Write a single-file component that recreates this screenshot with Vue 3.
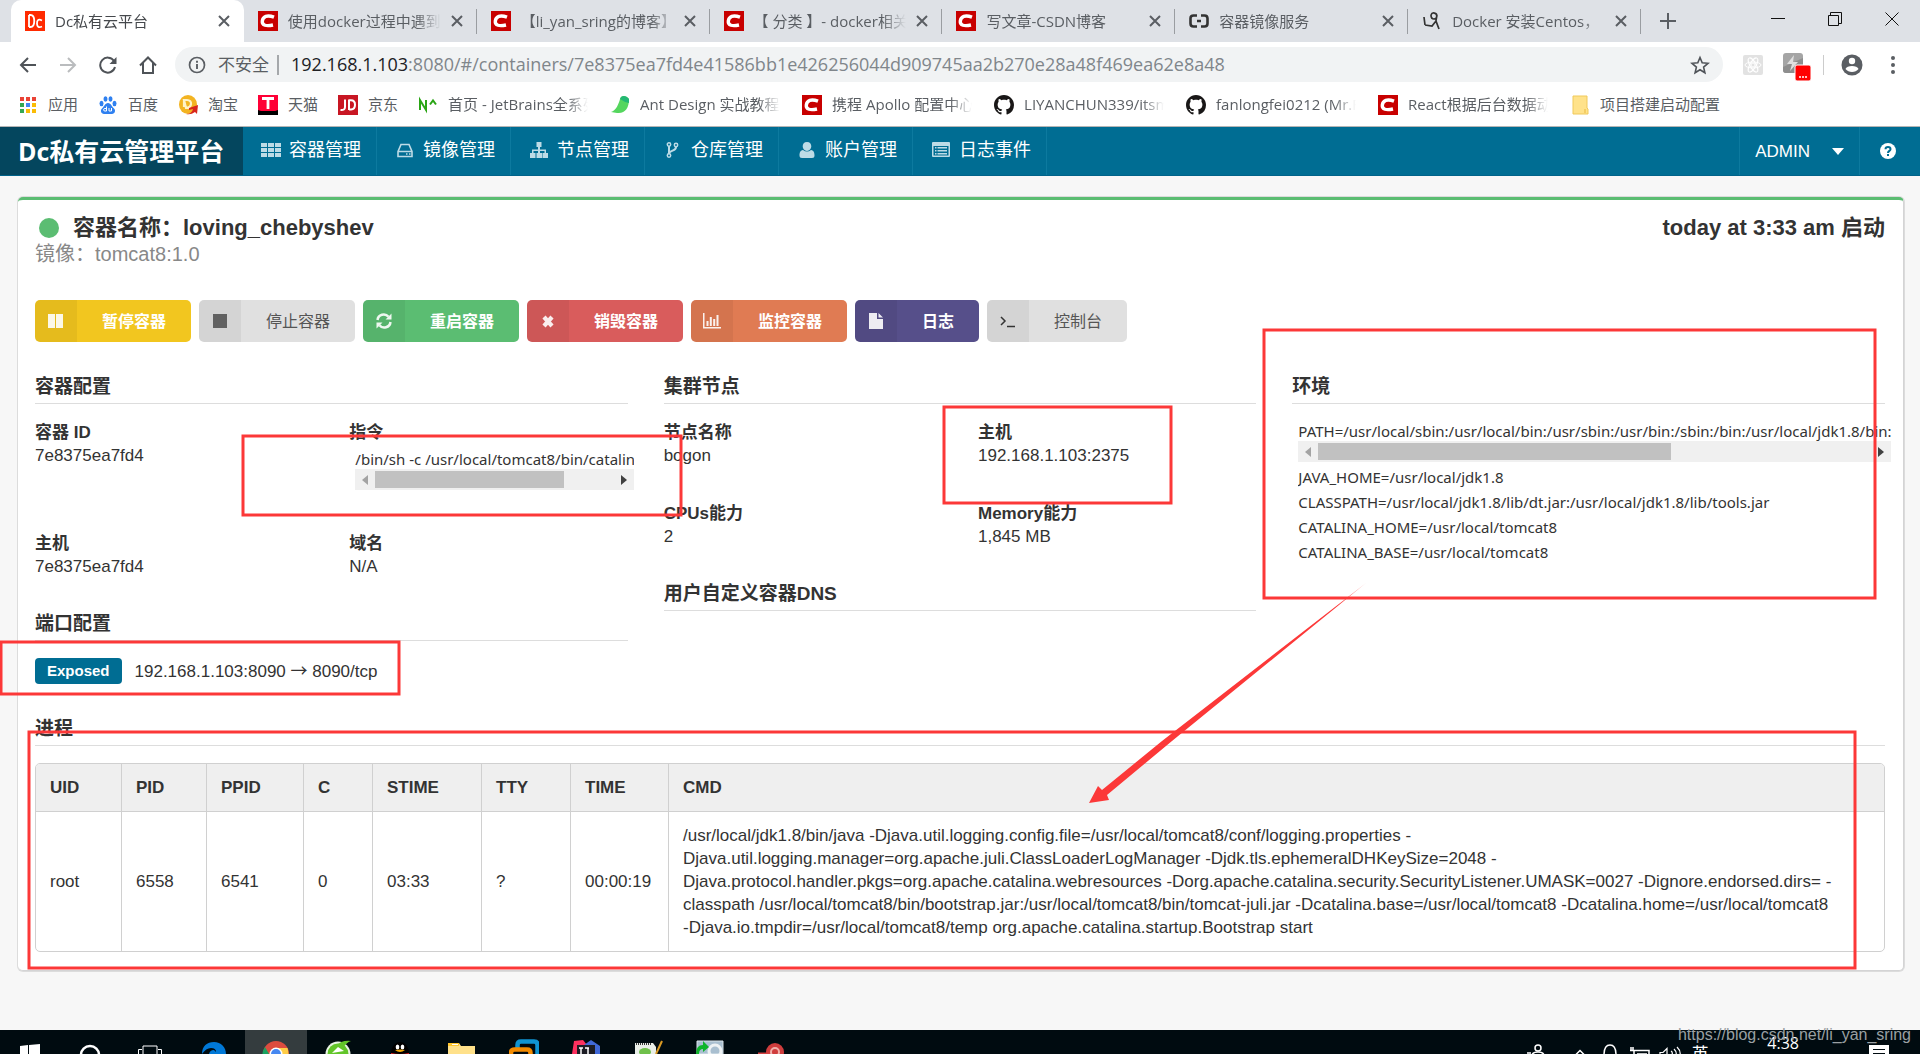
<script setup>
const tabs = [
  { title: 'Dc私有云平台', icon: 'dc', active: true },
  { title: '使用docker过程中遇到的问题', icon: 'csdn' },
  { title: '【li_yan_sring的博客】', icon: 'csdn' },
  { title: '【 分类 】- docker相关', icon: 'csdn' },
  { title: '写文章-CSDN博客', icon: 'csdn' },
  { title: '容器镜像服务', icon: 'aliyun' },
  { title: 'Docker 安装Centos，', icon: 'figure' }
]

const bookmarks = [
  { title: '应用', icon: 'apps' },
  { title: '百度', icon: 'baidu' },
  { title: '淘宝', icon: 'taobao' },
  { title: '天猫', icon: 'tmall' },
  { title: '京东', icon: 'jd' },
  { title: '首页 - JetBrains全系列', icon: 'na' },
  { title: 'Ant Design 实战教程（', icon: 'leaf' },
  { title: '携程 Apollo 配置中心', icon: 'csdn' },
  { title: 'LIYANCHUN339/itsm', icon: 'github' },
  { title: 'fanlongfei0212 (Mr.F', icon: 'github' },
  { title: 'React根据后台数据动态', icon: 'csdn' },
  { title: '项目搭建启动配置', icon: 'folder' }
]

const nav = [
  { title: '容器管理', icon: 'grid' },
  { title: '镜像管理', icon: 'disk' },
  { title: '节点管理', icon: 'sitemap' },
  { title: '仓库管理', icon: 'fork' },
  { title: '账户管理', icon: 'user' },
  { title: '日志事件', icon: 'list' }
]

const actions = [
  { title: '暂停容器', icon: 'pause', tone: 'yellow' },
  { title: '停止容器', icon: 'stop', tone: 'grey' },
  { title: '重启容器', icon: 'refresh', tone: 'green' },
  { title: '销毁容器', icon: 'remove', tone: 'red' },
  { title: '监控容器', icon: 'chart', tone: 'orange' },
  { title: '日志', icon: 'file', tone: 'purple' },
  { title: '控制台', icon: 'terminal', tone: 'grey' }
]

const nodeFields = [
  { label: '节点名称', value: 'bogon' },
  { label: '主机', value: '192.168.1.103:2375' },
  { label: 'CPUs能力', value: '2' },
  { label: 'Memory能力', value: '1,845 MB' }
]

const env = [
  'JAVA_HOME=/usr/local/jdk1.8',
  'CLASSPATH=/usr/local/jdk1.8/lib/dt.jar:/usr/local/jdk1.8/lib/tools.jar',
  'CATALINA_HOME=/usr/local/tomcat8',
  'CATALINA_BASE=/usr/local/tomcat8'
]

const columns = ['UID', 'PID', 'PPID', 'C', 'STIME', 'TTY', 'TIME', 'CMD']
const cmd = [
  '/usr/local/jdk1.8/bin/java -Djava.util.logging.config.file=/usr/local/tomcat8/conf/logging.properties -',
  'Djava.util.logging.manager=org.apache.juli.ClassLoaderLogManager -Djdk.tls.ephemeralDHKeySize=2048 -',
  'Djava.protocol.handler.pkgs=org.apache.catalina.webresources -Dorg.apache.catalina.security.SecurityListener.UMASK=0027 -Dignore.endorsed.dirs= -',
  'classpath /usr/local/tomcat8/bin/bootstrap.jar:/usr/local/tomcat8/bin/tomcat-juli.jar -Dcatalina.base=/usr/local/tomcat8 -Dcatalina.home=/usr/local/tomcat8',
  '-Djava.io.tmpdir=/usr/local/tomcat8/temp org.apache.catalina.startup.Bootstrap start'
].join('\n')
const rows = [['root', '6558', '6541', '0', '03:33', '?', '00:00:19', cmd]]
</script>

<template>
  <div class="screen">
    <header class="browser">
      <div class="tabstrip">
        <div class="tabs">
          <div v-for="t in tabs" :key="t.title" class="tab" :class="{ active: t.active }">
            <svg class="fav" viewBox="0 0 20 20">
              <template v-if="t.icon === 'dc'">
                <rect width="20" height="20" fill="#ff2a00" />
                <path d="M4 4v12M4 4h1.500c5 0 5 12 0 12H4M17 9.500c-4-2-5 0-5 3s1.500 4.500 5 3" fill="none" stroke="#fff" stroke-width="1.800" />
              </template>
              <template v-else-if="t.icon === 'csdn'">
                <rect width="20" height="20" fill="#c80000" />
                <path d="M16 6.200C9 3.500 5 5.500 4.300 10c-.5 4.500 4 5.500 10.700 4" fill="none" stroke="#fff" stroke-width="3.400" />
              </template>
              <path v-else-if="t.icon === 'aliyun'" d="M8 4.500H4.500Q1.500 4.500 1.500 7.500v5q0 3 3 3H8M12 4.500h3.500q3 0 3 3v5q0 3-3 3H12M8 10h4" fill="none" stroke="#333" stroke-width="2.600" />
              <path v-else d="M9 4a3 3 0 1 1 3 4Q9 8 9 4M15 4q-1 5-1 6l3 8M14 10L10 15l-7-1M2 6l1 8" fill="none" stroke="#333" stroke-width="1.700" />
            </svg>
            <span class="tab-title">{{ t.title }}</span>
            <button class="plain tab-close" aria-label="关闭标签页">
              <svg width="12" height="12" viewBox="0 0 12 12"><path d="M1 1l10 10M11 1L1 11" stroke="#5a5e63" stroke-width="2" /></svg>
            </button>
          </div>
        </div>
        <button class="plain new-tab" aria-label="新标签页">
          <svg width="16" height="16" viewBox="0 0 16 16"><path d="M8 0v16M0 8h16" stroke="#5a5e63" stroke-width="2" /></svg>
        </button>
        <div class="window-buttons">
          <button class="plain" aria-label="最小化"><svg width="14" height="14" viewBox="0 0 14 14"><path d="M0 6.500h14" stroke="#111" /></svg></button>
          <button class="plain" aria-label="还原"><svg width="14" height="14" viewBox="0 0 14 14"><path d="M.5 3.500h10v10H.5zM2.500 3.500v-3h11v11h-3" fill="none" stroke="#111" /></svg></button>
          <button class="plain" aria-label="关闭"><svg width="14" height="14" viewBox="0 0 14 14"><path d="M.5.5l13 13M13.500.5l-13 13" stroke="#111" /></svg></button>
        </div>
      </div>

      <div class="toolbar">
        <button class="plain tool" aria-label="后退"><svg width="18" height="18" viewBox="0 0 18 18"><path d="M17 9H2M9 2L2 9l7 7" fill="none" stroke="#4f5358" stroke-width="2" /></svg></button>
        <button class="plain tool" aria-label="前进"><svg width="18" height="18" viewBox="0 0 18 18"><path d="M1 9h15M9 2l7 7-7 7" fill="none" stroke="#babcbe" stroke-width="2" /></svg></button>
        <button class="plain tool" aria-label="重新加载"><svg width="18" height="18" viewBox="0 0 18 18"><path d="M15 5A7.500 7.500 0 1 0 16 11" fill="none" stroke="#4f5358" stroke-width="2" /><path d="M17.500 1v7h-7z" fill="#4f5358" /></svg></button>
        <button class="plain tool" aria-label="主页"><svg width="18" height="18" viewBox="0 0 18 18"><path d="M1 9.500L9 1.500l8 8M4 7v10h10V7" fill="none" stroke="#4f5358" stroke-width="2" /></svg></button>
        <div class="omnibox">
          <svg width="18" height="18" viewBox="0 0 18 18"><circle cx="9" cy="9" r="7.500" fill="none" stroke="#5a5e63" stroke-width="1.700" /><path d="M9 8v5M9 4.700v2" stroke="#5a5e63" stroke-width="1.900" /></svg>
          <span class="insecure">不安全</span>
          <label class="host" for="address">192.168.1.103</label>
          <input id="address" class="address" type="text" value=":8080/#/containers/7e8375ea7fd4e41586bb1e426256044d909745aa2b270e28a48f469ea62e8a48" />
          <button class="plain" aria-label="加入书签"><svg width="20" height="20" viewBox="0 0 20 20"><path d="M10 2.500l2.200 5.300 5.800.5-4.400 3.800 1.300 5.600L10 14.700l-4.900 3 1.300-5.600L2 8.300l5.800-.5z" fill="none" stroke="#4f5358" stroke-width="1.600" /></svg></button>
        </div>
        <div class="extensions">
          <svg width="20" height="20" viewBox="0 0 20 20"><rect width="20" height="20" rx="2" fill="#e2e2e2" /><g fill="none" stroke="#fff"><ellipse cx="10" cy="10" rx="8" ry="3" /><ellipse cx="10" cy="10" rx="8" ry="3" transform="rotate(60 10 10)" /><ellipse cx="10" cy="10" rx="8" ry="3" transform="rotate(120 10 10)" /><circle cx="10" cy="10" r="2" /></g></svg>
          <svg class="thunder" width="28" height="28" viewBox="0 0 28 28"><rect y="0" width="20" height="20" rx="3" fill="#a5a5a5" /><path d="M0 14L20 5v12q0 3-3 3H3q-3 0-3-3z" fill="#8e8e8e" /><path d="M11 2L4 11h5l-2 7 8-9h-5z" fill="#e0e0e0" /><rect x="12" y="12" width="16" height="16" rx="2" fill="#f00" stroke="#fff" /><path d="M16 24h2M19 24h2M22 24h2" stroke="#fff" stroke-width="1.500" /></svg>
          <span class="tool-sep"></span>
          <svg width="22" height="22" viewBox="0 0 22 22"><circle cx="11" cy="11" r="10.500" fill="#5a5e63" /><circle cx="11" cy="7" r="3.200" fill="#fff" /><path d="M4.500 15c1-4 12-4 13 0-3 4-10 4-13 0z" fill="#fff" /></svg>
          <svg class="dots" width="4" height="18" viewBox="0 0 4 18"><circle cx="2" cy="2" r="2" fill="#5a5e63" /><circle cx="2" cy="9" r="2" fill="#5a5e63" /><circle cx="2" cy="16" r="2" fill="#5a5e63" /></svg>
        </div>
      </div>

      <nav class="bookmarks">
        <a v-for="b in bookmarks" :key="b.title" href="#" class="bookmark">
          <svg class="fav" viewBox="0 0 20 20">
            <template v-if="b.icon === 'apps'">
              <path d="M2 2h4v4H2zM8 2h4v4H8zM14 2h4v4h-4z" fill="#ea4335" />
              <path d="M2 8h4v4H2zM2 14h4v4H2z" fill="#34a853" />
              <path d="M8 8h4v4H8z" fill="#4285f4" />
              <path d="M14 8h4v4h-4zM8 14h4v4H8zM14 14h4v4h-4z" fill="#fbbc05" />
            </template>
            <g v-else-if="b.icon === 'baidu'" fill="#2f80f0">
              <ellipse cx="3.500" cy="8.500" rx="2" ry="2.700" /><ellipse cx="7.500" cy="4" rx="2" ry="2.700" /><ellipse cx="12.500" cy="4" rx="2" ry="2.700" /><ellipse cx="16.500" cy="8.500" rx="2" ry="2.700" />
              <path d="M10 8c3 0 4 4 6 5.500s1 5.500-2 5.500H6c-3 0-4-4-2-5.500S7 8 10 8z" />
              <path d="M8.500 11.500V16M8.500 16H7q-1.500 0-1.500-1.200T7 13.500h1.500M11 13v3h2.500v-3" fill="none" stroke="#fff" />
            </g>
            <template v-else-if="b.icon === 'taobao'">
              <ellipse cx="10" cy="9.500" rx="9" ry="9.500" fill="#f3b422" /><path d="M6 5h3c6 0 5 8-1 8zV12" fill="none" stroke="#fff3c8" stroke-width="2.200" /><path d="M8 19q6 0 7-5l-4 1v-2l9-3-1 9-2-2q-4 3-9 2z" fill="#d8261c" />
            </template>
            <template v-else-if="b.icon === 'tmall'">
              <rect width="20" height="20" fill="#ff0036" /><path d="M0 15l3 1h14l3-1v5H0z" fill="#000" /><path d="M4 3.500h12M10 3.500V14" stroke="#fff" stroke-width="2.800" />
            </template>
            <template v-else-if="b.icon === 'jd'">
              <rect width="20" height="20" fill="#c81623" /><path d="M7 4.500V12q0 3.500-4.500 3M11 4.500v10.500M11 5.200h2q4 0 4 4.500t-4 4.800h-2" fill="none" stroke="#fff" stroke-width="2" />
            </template>
            <path v-else-if="b.icon === 'na'" d="M2 15V5l6 10V5M12 9.500L15 5.500l3 4" fill="none" stroke="#2aa515" stroke-width="2" />
            <template v-else-if="b.icon === 'leaf'">
              <path d="M1 17C6 16 9 8 10 4c1-4 6-4 9 0 0 9-4 15-12 14z" fill="#55d65e" /><path d="M10 4c1-4 6-4 9 0v4q-5-1-9-4z" fill="#24b874" />
            </template>
            <template v-else-if="b.icon === 'csdn'">
              <rect width="20" height="20" fill="#c80000" /><path d="M16 6.200C9 3.500 5 5.500 4.300 10c-.5 4.500 4 5.500 10.700 4" fill="none" stroke="#fff" stroke-width="3.400" />
            </template>
            <path v-else-if="b.icon === 'github'" transform="scale(1.250)" fill="#191717" d="M8 0C3.580 0 0 3.580 0 8c0 3.540 2.290 6.530 5.470 7.590.4.070.55-.17.55-.38 0-.19-.01-.82-.01-1.490-2.010.37-2.530-.49-2.690-.94-.09-.23-.48-.94-.82-1.130-.28-.15-.68-.52-.01-.53.63-.01 1.080.58 1.230.82.72 1.210 1.870.87 2.330.66.07-.52.28-.87.51-1.070-1.780-.2-3.640-.89-3.640-3.950 0-.87.31-1.590.82-2.150-.08-.2-.36-1.020.08-2.120 0 0 .67-.21 2.200.82.64-.18 1.320-.27 2-.27s1.360.09 2 .27c1.530-1.040 2.200-.82 2.200-.82.44 1.100.16 1.920.08 2.120.51.56.82 1.270.82 2.150 0 3.070-1.870 3.750-3.650 3.950.29.25.54.73.54 1.480 0 1.070-.01 1.930-.01 2.200 0 .21.15.46.55.38A8.010 8.010 0 0 0 16 8c0-4.420-3.580-8-8-8z" />
            <template v-else>
              <path d="M3 1h14v12l1 1v5H3z" fill="#ffe28a" stroke="#f0c95a" /><path d="M15 14v4" stroke="#e8b93f" />
            </template>
          </svg>
          <span class="bookmark-title">{{ b.title }}</span>
        </a>
      </nav>
    </header>

    <div class="menu">
      <a href="#" class="brand">Dc私有云管理平台</a>
      <nav class="menu-items">
        <a v-for="n in nav" :key="n.title" href="#" class="menu-item">
          <svg width="20" height="18" viewBox="0 0 20 18" fill="#bddbe6">
            <path v-if="n.icon === 'grid'" d="M0 2h6v4H0zM7 2h6v4H7zM14 2h6v4h-6zM0 7h6v4H0zM7 7h6v4H7zM14 7h6v4h-6zM0 12h6v4H0zM7 12h6v4H7zM14 12h6v4h-6z" />
            <g v-else-if="n.icon === 'disk'" fill="none" stroke="#bddbe6" stroke-width="1.600"><path d="M3 10.500L6 3.500h8l3 7v5H3zM3 10.500h14" /><path d="M11 13h1.500M14 13h1.500" /></g>
            <path v-else-if="n.icon === 'sitemap'" d="M7.500 1h5v5H11v2.500h6V12h2v5h-5.500v-5H15.500v-2H11v2h2v5H7.500v-5H9v-2H4.500v2h2v5H1v-5h2V8.500h6V6H7.500z" />
            <g v-else-if="n.icon === 'fork'" fill="none" stroke="#bddbe6" stroke-width="1.500"><circle cx="6" cy="3.500" r="1.700" /><circle cx="6" cy="14.500" r="1.700" /><circle cx="13" cy="4" r="1.700" /><path d="M6 5v8M13 6c0 4-5 3-7 6" stroke-width="2" /></g>
            <path v-else-if="n.icon === 'user'" d="M10 1c3 0 4.300 2 4.300 4.300S12.500 10 10 10 5.700 7.600 5.700 5.300 7 1 10 1zM6 9q4 3 8 0c3 .5 3.500 3 3.500 5.500q0 2.500-2.500 2.500H5q-2.500 0-2.500-2.500C2.500 12 3 9.500 6 9z" />
            <g v-else><path fill-rule="evenodd" d="M2 1h16q1 0 1 1v13q0 1-1 1H2q-1 0-1-1V2q0-1 1-1zM2.500 5v9.500h15V5z" /><path d="M4 6h1.500v1.500H4zM6.500 6H16v1.500H6.500zM4 9h1.500v1.500H4zM6.500 9H16v1.500H6.500zM4 12h1.500v1.500H4zM6.500 12H16v1.500H6.500z" /></g>
          </svg>
          <span>{{ n.title }}</span>
        </a>
      </nav>
      <button class="plain account">ADMIN
        <svg width="12" height="7" viewBox="0 0 12 7"><path d="M0 0h12L6 7z" fill="#fff" /></svg>
      </button>
      <a href="#" class="help" aria-label="帮助">
        <svg width="18" height="18" viewBox="0 0 18 18"><circle cx="9" cy="9" r="8" fill="#fff" /><path d="M6.500 7.200Q6.500 5 9 5t2.500 2.200C11.500 9 9 8.800 9 11M9 12v2" fill="none" stroke="#006d93" stroke-width="2" /></svg>
      </a>
    </div>

    <main class="content">
      <section class="card">
        <div class="card-head">
          <div>
            <h1><svg width="20" height="20" viewBox="0 0 20 20"><circle cx="10" cy="10" r="10" fill="#5bbd72" /></svg>容器名称：loving_chebyshev</h1>
            <p class="image-name">镜像：tomcat8:1.0</p>
          </div>
          <h2 class="started">today at 3:33 am 启动</h2>
        </div>

        <div class="actions">
          <button v-for="a in actions" :key="a.title" class="action" :class="a.tone">
            <span class="action-icon">
              <svg width="18" height="18" viewBox="0 0 18 18" fill="currentColor">
                <path v-if="a.icon === 'pause'" d="M1 2h7v14H1zM9 2h7v14H9z" />
                <path v-else-if="a.icon === 'stop'" d="M2 2h14v14H2z" />
                <g v-else-if="a.icon === 'refresh'"><path d="M2.500 8A6.200 6.200 0 0 1 13.500 4.800M15.500 10A6.200 6.200 0 0 1 4.500 13.200" fill="none" stroke="currentColor" stroke-width="2.500" /><path d="M16.500 1.500v6h-6zM1.500 16.500v-6h6z" /></g>
                <path v-else-if="a.icon === 'remove'" d="M5 5l8 9M13 5L5 14" stroke="currentColor" stroke-width="4.200" />
                <path v-else-if="a.icon === 'chart'" d="M0 1h1.500v14H19v1.500H0zM3.500 9h2v5h-2zM6.800 5h2v9h-2zM10.200 7h2v7h-2zM13.500 3h2v11h-2z" />
                <path v-else-if="a.icon === 'file'" d="M2 1h8v6h6v10H2zM11.500 1L16 5.500h-4.500z" />
                <path v-else d="M2 5l4 4-4 4M8 14.500h8" fill="none" stroke="#222" stroke-width="1.500" />
              </svg>
            </span>
            <span class="action-text">{{ a.title }}</span>
          </button>
        </div>

        <div class="columns">
          <div>
            <h3>容器配置</h3>
            <dl class="fields">
              <div class="field tall"><dt>容器 ID</dt><dd>7e8375ea7fd4</dd></div>
              <div class="field tall">
                <dt>指令</dt>
                <dd class="command">
                  <div class="mono">/bin/sh -c /usr/local/tomcat8/bin/catalina.sh run</div>
                  <div class="hscroll"><span class="arrow-left"></span><span class="track"><span class="thumb" style="width: 80%"></span></span><span class="arrow-right"></span></div>
                </dd>
              </div>
              <div class="field"><dt>主机</dt><dd>7e8375ea7fd4</dd></div>
              <div class="field"><dt>域名</dt><dd>N/A</dd></div>
            </dl>
            <h3>端口配置</h3>
            <p class="port"><span class="badge">Exposed</span><span>192.168.1.103:8090 <span class="arrow">→</span> 8090/tcp</span></p>
          </div>
          <div>
            <h3>集群节点</h3>
            <dl class="fields">
              <div v-for="f in nodeFields" :key="f.label" class="field"><dt>{{ f.label }}</dt><dd>{{ f.value }}</dd></div>
            </dl>
            <h3>用户自定义容器DNS</h3>
          </div>
          <div>
            <h3>环境</h3>
            <div class="env">
              <div class="mono path">PATH=/usr/local/sbin:/usr/local/bin:/usr/sbin:/usr/bin:/sbin:/bin:/usr/local/jdk1.8/bin:/usr/local/tomcat8/bin</div>
              <div class="hscroll"><span class="arrow-left"></span><span class="track"><span class="thumb" style="width: 64%"></span></span><span class="arrow-right"></span></div>
              <ul class="env-list"><li v-for="e in env" :key="e" class="mono">{{ e }}</li></ul>
            </div>
          </div>
        </div>

        <h3>进程</h3>
        <table class="processes">
          <colgroup><col class="c-uid" /><col class="c-pid" /><col class="c-ppid" /><col class="c-c" /><col class="c-stime" /><col class="c-tty" /><col class="c-time" /><col /></colgroup>
          <thead><tr><th v-for="c in columns" :key="c" scope="col">{{ c }}</th></tr></thead>
          <tbody><tr v-for="r in rows" :key="r[1]"><td v-for="v in r" :key="v">{{ v }}</td></tr></tbody>
        </table>
      </section>
    </main>

    <footer class="taskbar">
      <div class="apps">
        <button class="plain sys" aria-label="开始"><svg width="30" height="24"><path d="M5 16l8-1v12H5zM14 15l11-1v12H14z" fill="#fff" /></svg></button>
        <button class="plain sys" aria-label="搜索"><svg width="30" height="24"><circle cx="15" cy="25" r="9" fill="none" stroke="#fff" stroke-width="2.500" /></svg></button>
        <button class="plain sys" aria-label="任务视图"><svg width="30" height="24"><path d="M8 25v-9h14v9M7 19.500H3.500V25M23 19.500h3.500V25" fill="none" stroke="#fff" /></svg></button>
        <button class="plain app" aria-label="Edge"><svg width="30" height="24"><path d="M3 24c0-8 5-12 12-12s12 5 12 12H10c1-3 2-4 5-4l2 2q0-4-5-4-5 0-9 6z" fill="#0078d7" /></svg></button>
        <button class="plain app current" aria-label="Chrome"><svg width="30" height="24"><circle cx="15" cy="24" r="13" fill="#dc4c3f" /><path d="M4 17l7 12H2q-2-6 2-12z" fill="#1aa260" /><path d="M15 18h11.500q2 6 0 12H15z" fill="#ffcd46" /><circle cx="15" cy="24" r="6.500" fill="#fff" /><circle cx="15" cy="24" r="5" fill="#4688f1" /></svg></button>
        <button class="plain app" aria-label="浏览器"><svg width="30" height="24"><circle cx="15" cy="24" r="12.500" fill="#e9f5e4" /><circle cx="15" cy="24" r="10.500" fill="#62c529" /><path d="M13 16q5-6 15-5-4 1-8 7z" fill="#62c529" /><path d="M9 23l6-6 6 4z" fill="#fff" /></svg></button>
        <button class="plain app" aria-label="QQ"><svg width="30" height="24"><path d="M6 24c0-16 18-16 18 0z" fill="#000" /><ellipse cx="12.500" cy="17" rx="1.800" ry="2.500" fill="#fff" /><ellipse cx="17.500" cy="17" rx="1.800" ry="2.500" fill="#fff" /><path d="M10 20q5-1 10 0-5 4-10 0z" fill="#f5a800" /><path d="M6 23q9 2 18 0v1H6z" fill="#e02020" /></svg></button>
        <button class="plain app" aria-label="文件夹"><svg width="30" height="24"><path d="M1 13h11l2 3h14v8H1z" fill="#ffe18a" /><path d="M1 13h11v3H1z" fill="#ffc62e" /><path d="M5 14h6v1H5z" fill="#fff" /></svg></button>
        <button class="plain app" aria-label="VMware"><svg width="30" height="24"><path d="M8.500 18v-3q0-3.500 3.500-3.500h13q3.500 0 3.500 3.500v9" fill="none" stroke="#0f94d2" stroke-width="4.500" /><path d="M2 26v-3q0-3.500 3.500-3.500H18q3.500 0 3.500 3.500v3" fill="none" stroke="#f38b00" stroke-width="4.500" /></svg></button>
        <button class="plain app" aria-label="IntelliJ IDEA"><svg width="30" height="24"><path d="M1 24l2-13 9-1 4 5v9z" fill="#fc315f" /><path d="M13 15l7-5 9 6v8H14z" fill="#4169d8" /><path d="M6 15h18v9H6z" fill="#1d1d25" /><path d="M8 18h4M10 18v6M14 18h4M17 18v6" stroke="#fff" stroke-width="1.500" /></svg></button>
        <button class="plain app" aria-label="Notepad++"><svg width="30" height="24"><path d="M2 13h18l3 4v8H2z" fill="#e9eee8" /><path d="M3 14h16" stroke="#333" stroke-width="2" stroke-dasharray="1 1" /><ellipse cx="12" cy="22" rx="6" ry="4" fill="#6fc04b" /><path d="M29 11l-6 13" stroke="#d99a23" stroke-width="2" /></svg></button>
        <button class="plain app" aria-label="远程工具"><svg width="30" height="24"><path d="M2 11h26v13H2z" fill="#a9bfd0" stroke="#dbe5ea" /><circle cx="20" cy="21" r="6" fill="none" stroke="#eef2f4" stroke-width="3" /><path d="M1 24q0-9 7-9v-4l6 6-6 5v-3q-4 0-4 5z" fill="#0eb52a" /></svg></button>
        <button class="plain app" aria-label="网络工具"><svg width="30" height="24"><circle cx="18" cy="22" r="9" fill="#cf3d3d" /><circle cx="18" cy="22" r="4" fill="none" stroke="#f2b0aa" stroke-width="2" /><path d="M1 24h12" stroke="#d34141" stroke-width="3" /></svg></button>
      </div>
      <div class="tray">
        <svg width="30" height="24"><circle cx="17" cy="18" r="3" fill="none" stroke="#fff" stroke-width="1.500" /><path d="M11 26q0-4 6-4t6 4M6 23h4" fill="none" stroke="#fff" stroke-width="1.500" /></svg>
        <svg class="caret" width="30" height="24"><path d="M11 24.500l4-4 4 4" fill="none" stroke="#fff" stroke-width="1.500" /></svg>
        <svg width="30" height="24"><path d="M9 25q0-10 6-10t6 10" fill="none" stroke="#fff" stroke-width="1.500" /></svg>
        <svg width="30" height="24"><path d="M5 20.500h4V25M9 20.500h15V25M6 17v3M8 17v3M12 24h10" fill="none" stroke="#fff" stroke-width="1.500" /></svg>
        <svg width="30" height="24"><path d="M5 25v-2.500h3l4-4V25M16 21q2 1 1 4M19 19q3 3 2 6M22 17q4 4 3 8" fill="none" stroke="#fff" stroke-width="1.200" /></svg>
        <span class="ime">英</span>
        <time class="clock">4:38</time>
        <svg class="notice" width="20" height="24"><path d="M0 15h20v9H0z" fill="#fff" /><path d="M4 19.500h12M4 23.500h12" stroke="#000b10" /></svg>
      </div>
    </footer>

    <svg class="marks" aria-hidden="true">
      <g fill="none" stroke="#fc3838" stroke-width="3">
        <rect x="243" y="436" width="438" height="79" />
        <rect x="944" y="407" width="227" height="96" />
        <rect x="1264" y="330" width="611" height="268" />
        <rect x="1" y="642" width="398" height="52" />
        <rect x="29" y="732" width="1826" height="236" />
      </g>
      <defs><linearGradient id="fade" x1="1" y1="0" x2="0" y2="1"><stop offset="0" stop-color="#fc3838" stop-opacity="0.400" /><stop offset="0.100" stop-color="#fc3838" /></linearGradient></defs>
      <path d="M1089 803l9-17 4 4 60-49L1366 583l-194 158-65 54 2 5z" fill="url(#fade)" />
    </svg>
    <span class="watermark">https://blog.csdn.net/li_yan_sring</span>
  </div>
</template>

<style>
body { margin: 0; background: #f7f7f7; }
</style>

<style scoped>
* { box-sizing: border-box; }
.screen {
  position: relative;
  display: flex;
  flex-direction: column;
  min-height: 100vh;
  overflow: hidden;
  font-family: "Liberation Sans", "Noto Sans CJK SC", sans-serif;
  font-size: 17px;
  line-height: 23px;
  color: #333;
}
a { color: inherit; text-decoration: none; }
h1, h2, h3, p, dl, dd, ul { margin: 0; padding: 0; }
svg { display: block; flex: none; }
.plain {
  display: flex;
  align-items: center;
  justify-content: center;
  border: 0;
  padding: 0;
  background: none;
  font: inherit;
  color: inherit;
}

.browser { background: #fff; border-bottom: 1px solid #b5b5b5; font-family: "Open Sans", "Noto Sans CJK SC", sans-serif; font-size: 15px; color: #5a5e63; }
.tabstrip { display: flex; height: 42px; padding-left: 11px; background: #dee1e6; }
.tabs { display: flex; flex: 1; min-width: 0; }
.tab { position: relative; display: flex; flex: 1; align-items: center; gap: 10px; min-width: 0; padding: 0 14px; }
.tab::after { content: ""; position: absolute; right: 0; top: 9px; width: 1px; height: 25px; background: #9a9da1; }
.tab.active { background: #fff; border-radius: 10px 10px 0 0; color: #45484c; }
.tab.active::after { display: none; }
.fav { width: 20px; height: 20px; }
.tab-title, .bookmark-title { overflow: hidden; white-space: nowrap; }
.tab-title { flex: 1; mask-image: linear-gradient(90deg, #000 calc(100% - 24px), transparent); }
.new-tab { width: 54px; }
.window-buttons { display: flex; width: 225px; justify-content: flex-end; }
.window-buttons button { width: 57px; height: 38px; }

.toolbar { display: flex; align-items: center; height: 45px; padding-left: 8px; }
.tool { width: 40px; height: 40px; }
.omnibox { display: flex; flex: 1; align-items: center; height: 35px; margin-left: 7px; padding: 0 13px; border-radius: 18px; background: #f1f3f4; font-size: 18px; }
.insecure { margin-left: 12px; padding-right: 8px; border-right: 2px solid #a5a8ab; font-size: 17px; line-height: 20px; }
.host { margin-left: 12px; color: #202124; }
.address { flex: 1; min-width: 0; border: 0; padding: 0; background: none; outline: 0; font: inherit; color: #80868b; }
.extensions { display: flex; align-items: center; padding: 0 25px 0 20px; }
.thunder { margin: 4px 12px 0 20px; }
.tool-sep { width: 1px; height: 20px; margin-right: 17px; background: #ccc; }
.dots { margin-left: 28px; }

.bookmarks { display: flex; align-items: center; gap: 20px; height: 39px; padding: 0 18px 4px; overflow: hidden; }
.bookmark { display: flex; flex: none; align-items: center; gap: 10px; }
.bookmark-title { max-width: 142px; }
.bookmark:nth-child(n + 6):not(:last-child) .bookmark-title { width: 142px; mask-image: linear-gradient(90deg, #000 118px, transparent 140px); }

.menu { display: flex; height: 49px; background: #006d93; color: #fff; font-size: 17px; border-bottom: 1px solid #00638a; }
.brand { display: flex; align-items: center; width: 243px; padding-left: 18px; background: #04465e; font-family: "Open Sans", "Noto Sans CJK SC", sans-serif; font-size: 25px; font-weight: 700; white-space: nowrap; }
.menu-items { display: flex; flex: 1; }
.menu-item { display: flex; align-items: center; gap: 8px; width: 134px; padding: 0 0 2px 18px; border-right: 1px solid #0d7a9f; font-size: 18px; white-space: nowrap; }
.account { gap: 22px; padding: 0 15px; border-left: 1px solid #0d7a9f; border-right: 1px solid #0d7a9f; }
.help { display: flex; align-items: center; justify-content: center; width: 60px; padding-right: 4px; }

.content { flex: 1; padding: 21px 16px 56px 18px; background: #f7f7f7; }
.card { padding: 14px 18px 18px 17px; border: 1px solid #d4d4d5; border-top: 3px solid #5bbd72; border-left-width: 0; border-radius: 5px; background: #fff; box-shadow: 0 0 0 1px #dcdcdc; }
.card-head { display: flex; justify-content: space-between; }
h1, h2 { font-size: 22px; line-height: 28px; font-weight: 700; }
h1 { display: flex; align-items: center; gap: 14px; padding-left: 4px; }
.image-name { font-size: 20px; line-height: 24px; color: #888; }

.actions { display: flex; flex-wrap: wrap; gap: 8px; margin-top: 34px; }
.action { display: flex; align-items: stretch; height: 42px; padding: 0; border: 0; border-radius: 5px; overflow: hidden; font: 700 16px/43px "Liberation Sans", "Noto Sans CJK SC", sans-serif; color: #fff; }
.action-icon { display: flex; align-items: center; justify-content: center; width: 42px; background: rgba(0, 0, 0, 0.05); }
.action-icon svg { opacity: 0.9; }
.action-text { padding: 0 25px; }
.yellow { background: #f2c61f; }
.green { background: #5bbd72; }
.red { background: #d95c5c; }
.orange { background: #e07b53; }
.purple { background: #564f8a; }
.grey { background: #e0e0e0; color: #555; font-weight: 400; }

.columns { display: grid; grid-template-columns: repeat(3, minmax(0, 1fr)); gap: 36px; margin-top: 31px; }
h3 { padding-bottom: 3px; border-bottom: 1px solid #ddd; font-size: 19px; line-height: 27px; font-weight: 700; }
.fields { display: grid; grid-template-columns: repeat(2, minmax(0, 1fr)); gap: 3px 36px; margin-top: 17px; }
.field { height: 78px; }
.field.tall { height: 108px; }
dt { font-weight: 700; }
.command { padding-top: 5px; width: 100%; margin-left: 6px; }
.mono { font-family: "Noto Sans", "Noto Sans CJK SC", sans-serif; font-size: 15px; line-height: 25px; white-space: nowrap; overflow: hidden; }
.command .mono, .mono.path { line-height: 20px; }
.hscroll { display: flex; align-items: center; justify-content: space-between; height: 21px; padding: 0 7px; background: #f0f0f0; }
.track { flex: 1; margin: 0 9px 0 7px; }
.thumb { display: block; height: 17px; background: #c1c1c1; }
.arrow-left, .arrow-right { border: 5px solid transparent; border-left-width: 0; border-right: 6px solid #a3a3a3; }
.arrow-right { border-right-width: 0; border-left: 6px solid #404040; }
.env { width: 100%; margin: 17px 0 0 6px; }
.env-list { margin-top: 3px; list-style: none; }
.port { display: flex; align-items: center; gap: 13px; margin-top: 17px; height: 26px; }
.arrow { font-family: "Noto Sans CJK SC", sans-serif; line-height: 20px; }
.badge { padding: 0 12px; border-radius: 4px; background: #006d93; color: #fff; font-size: 15px; line-height: 26px; font-weight: 700; }
.columns + h3 { margin-top: 31px; }

.processes { width: 100%; margin-top: 17px; table-layout: fixed; border-collapse: separate; border-spacing: 0; border: 1px solid #d0d0d0; border-radius: 5px; overflow: hidden; }
th, td { padding: 12px 14px; text-align: left; vertical-align: middle; border-left: 1px solid #d0d0d0; }
th:first-child, td:first-child { border-left: 0; }
th { background: #efefef; border-bottom: 1px solid #d0d0d0; }
td:last-child { white-space: pre; }
.c-uid, .c-pid { width: 85px; }
.c-ppid { width: 97px; }
.c-c { width: 69px; }
.c-stime { width: 109px; }
.c-tty { width: 89px; }
.c-time { width: 98px; }

.taskbar { display: flex; justify-content: space-between; height: 24px; overflow: hidden; background: #000b10; color: #fff; }
.apps, .tray { display: flex; }
.sys { width: 60px; }
.app { width: 62px; }
.sys + .app { margin-left: 3px; }
.current { background: #343c3e; }
.caret { margin-left: 14px; }
.ime { width: 30px; text-align: center; padding-top: 13px; }
.clock { margin-left: 52px; padding-top: 2px; font-family: "Open Sans", sans-serif; font-size: 16px; }
.notice { margin: 0 31px 0 70px; }

.marks { position: absolute; inset: 0; width: 100%; height: 100%; pointer-events: none; }
.watermark { position: absolute; right: 9px; bottom: 8px; color: #9aa0a3; font-size: 16px; }
</style>
